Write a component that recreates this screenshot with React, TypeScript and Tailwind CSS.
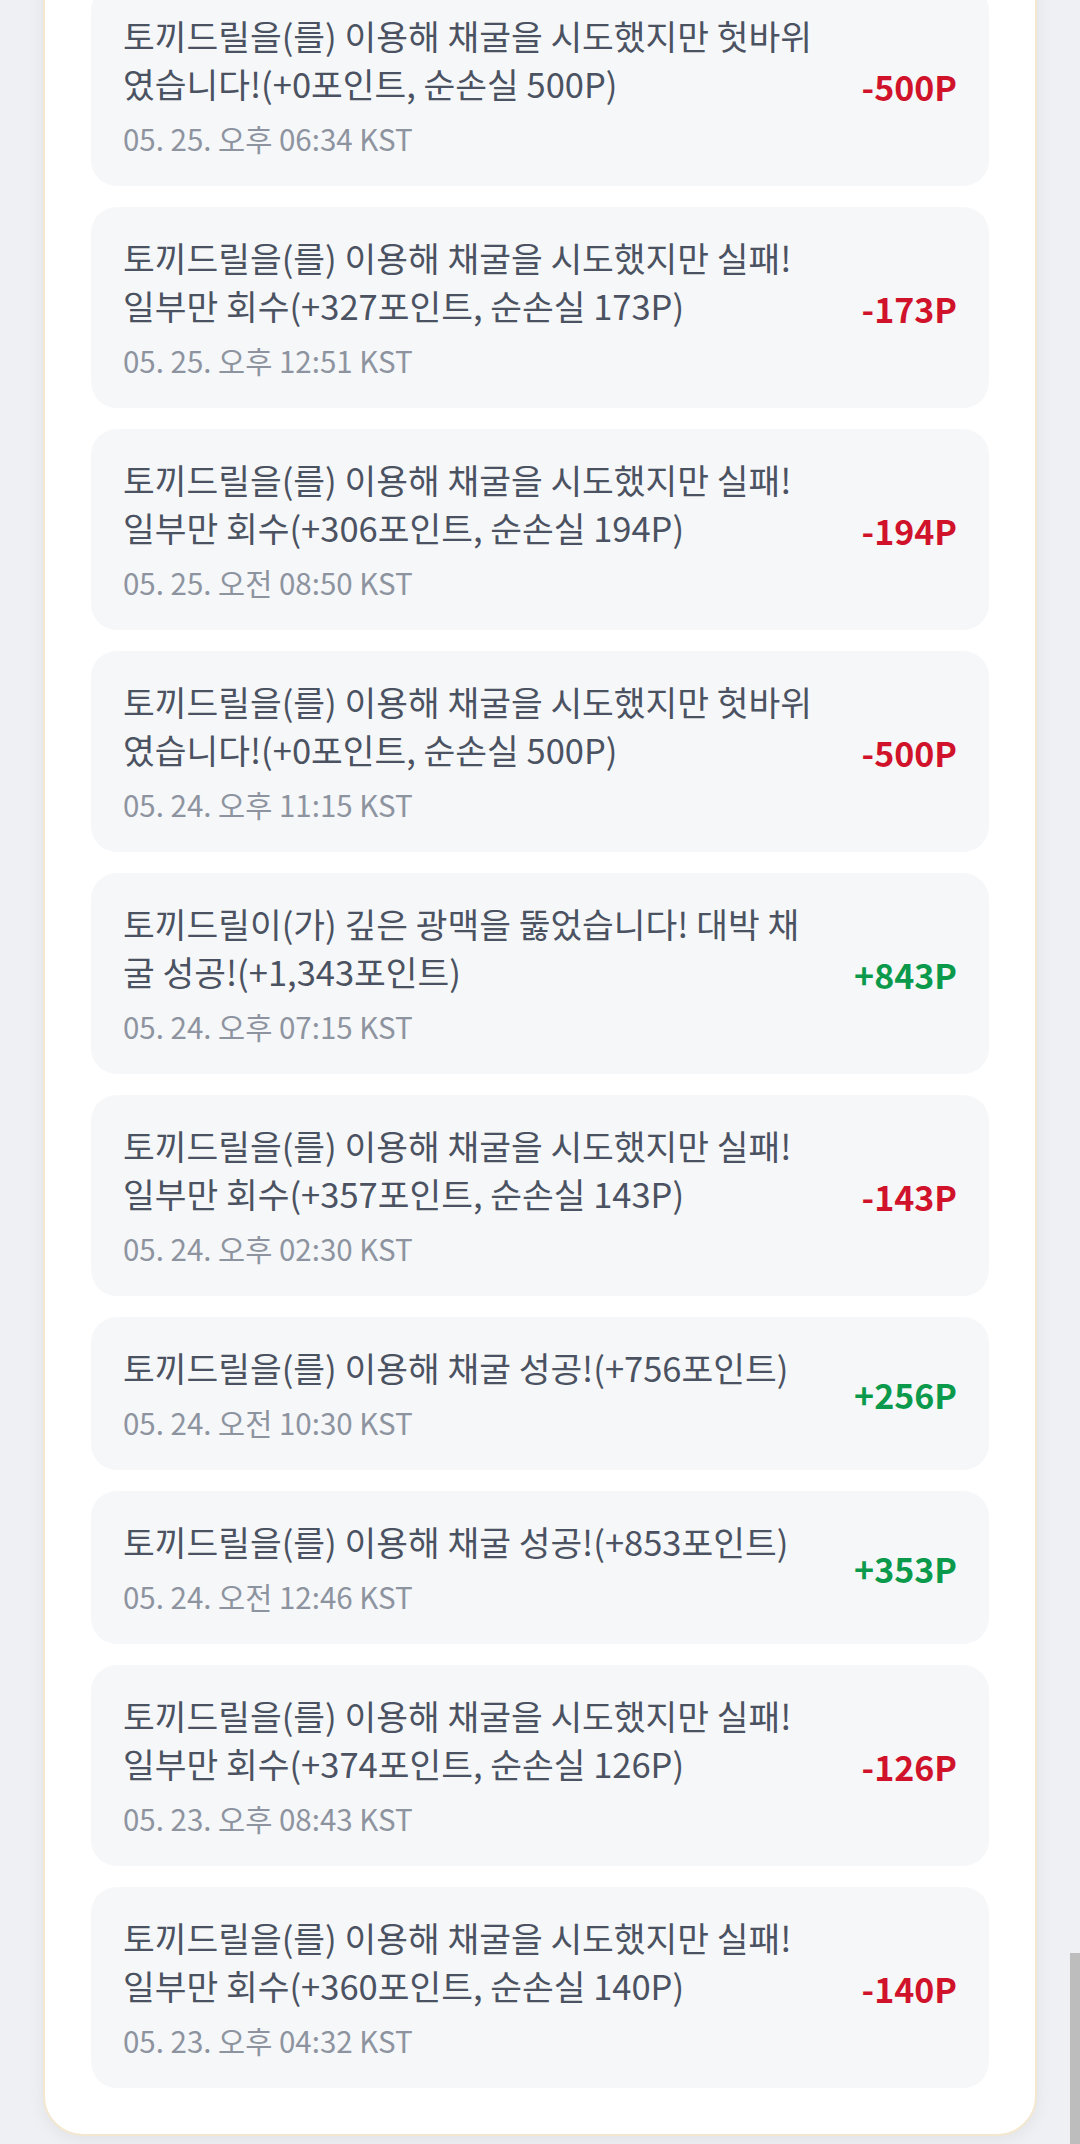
import React from "react";

type Item = { text: string; amount: string; time: string };

const items: Item[] = [
  { text: "토끼드릴을(를) 이용해 채굴을 시도했지만 헛바위였습니다!(+0포인트, 순손실 500P)", amount: "-500P", time: "05. 25. 오후 06:34 KST" },
  { text: "토끼드릴을(를) 이용해 채굴을 시도했지만 실패! 일부만 회수(+327포인트, 순손실 173P)", amount: "-173P", time: "05. 25. 오후 12:51 KST" },
  { text: "토끼드릴을(를) 이용해 채굴을 시도했지만 실패! 일부만 회수(+306포인트, 순손실 194P)", amount: "-194P", time: "05. 25. 오전 08:50 KST" },
  { text: "토끼드릴을(를) 이용해 채굴을 시도했지만 헛바위였습니다!(+0포인트, 순손실 500P)", amount: "-500P", time: "05. 24. 오후 11:15 KST" },
  { text: "토끼드릴이(가) 깊은 광맥을 뚫었습니다! 대박 채굴 성공!(+1,343포인트)", amount: "+843P", time: "05. 24. 오후 07:15 KST" },
  { text: "토끼드릴을(를) 이용해 채굴을 시도했지만 실패! 일부만 회수(+357포인트, 순손실 143P)", amount: "-143P", time: "05. 24. 오후 02:30 KST" },
  { text: "토끼드릴을(를) 이용해 채굴 성공!(+756포인트)", amount: "+256P", time: "05. 24. 오전 10:30 KST" },
  { text: "토끼드릴을(를) 이용해 채굴 성공!(+853포인트)", amount: "+353P", time: "05. 24. 오전 12:46 KST" },
  { text: "토끼드릴을(를) 이용해 채굴을 시도했지만 실패! 일부만 회수(+374포인트, 순손실 126P)", amount: "-126P", time: "05. 23. 오후 08:43 KST" },
  { text: "토끼드릴을(를) 이용해 채굴을 시도했지만 실패! 일부만 회수(+360포인트, 순손실 140P)", amount: "-140P", time: "05. 23. 오후 04:32 KST" },
];

export default function App() {
  return (
    <div
      className="relative h-[2144px] w-[1080px] overflow-hidden bg-[#eef0f3]"
      style={{ fontFamily: '"Noto Sans CJK KR", "Noto Sans", sans-serif' }}
    >
      <div className="mx-[43px] -mt-[63px] rounded-[40px] border-2 border-[#f3e8cf] bg-white px-[46px] pt-[46px] pb-[46px] shadow-[0_4px_18px_rgba(0,0,0,0.06)]">
        <div className="flex flex-col gap-[21px]">
          {items.map((it, i) => {
            const pos = it.amount.startsWith("+");
            return (
              <div
                key={i}
                className="flex items-center rounded-[26px] bg-[#f6f7f9] pl-[32px] pr-[32px] pt-[26px] pb-[27px]"
              >
                <div className="w-[695px] shrink-0">
                  <div className="text-[34.5px] leading-[48px] text-[#4b5261] [word-break:break-all]">
                    {it.text}
                  </div>
                  <div className="mt-[10px] text-[29.5px] leading-[42px] text-[#8d949f]">
                    {it.time}
                  </div>
                </div>
                <div
                  className={
                    "ml-auto mt-[3px] shrink-0 text-[34px] font-bold leading-[48px] " +
                    (pos ? "text-[#0b9a4b]" : "text-[#d0132a]")
                  }
                >
                  {it.amount}
                </div>
              </div>
            );
          })}
        </div>
      </div>
      <div className="absolute right-0 top-[1953px] h-[191px] w-[10px] bg-[#bdbdbd]" />
    </div>
  );
}
